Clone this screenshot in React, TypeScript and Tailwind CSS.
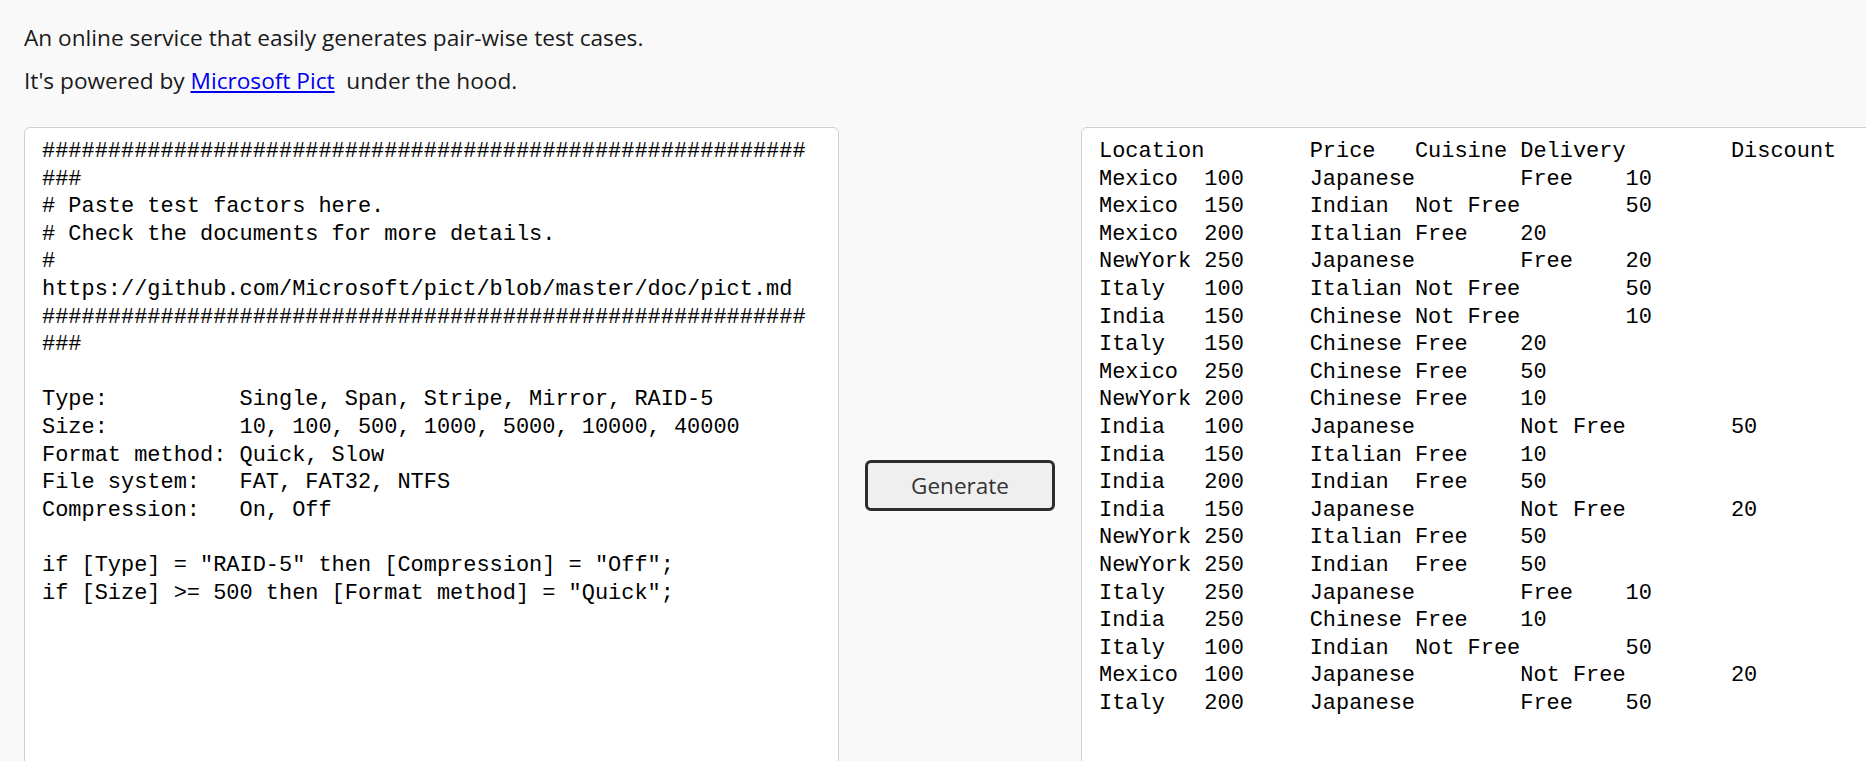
const FACTORS = [
  '##########################################################',
  '###',
  '# Paste test factors here.',
  '# Check the documents for more details.',
  '#',
  'https://github.com/Microsoft/pict/blob/master/doc/pict.md',
  '##########################################################',
  '###',
  '',
  'Type:          Single, Span, Stripe, Mirror, RAID-5',
  'Size:          10, 100, 500, 1000, 5000, 10000, 40000',
  'Format method: Quick, Slow',
  'File system:   FAT, FAT32, NTFS',
  'Compression:   On, Off',
  '',
  'if [Type] = "RAID-5" then [Compression] = "Off";',
  'if [Size] >= 500 then [Format method] = "Quick";',
].join('\n');

const RESULT = [
  'Location\tPrice\tCuisine\tDelivery\tDiscount',
  'Mexico\t100\tJapanese\tFree\t10',
  'Mexico\t150\tIndian\tNot Free\t50',
  'Mexico\t200\tItalian\tFree\t20',
  'NewYork\t250\tJapanese\tFree\t20',
  'Italy\t100\tItalian\tNot Free\t50',
  'India\t150\tChinese\tNot Free\t10',
  'Italy\t150\tChinese\tFree\t20',
  'Mexico\t250\tChinese\tFree\t50',
  'NewYork\t200\tChinese\tFree\t10',
  'India\t100\tJapanese\tNot Free\t50',
  'India\t150\tItalian\tFree\t10',
  'India\t200\tIndian\tFree\t50',
  'India\t150\tJapanese\tNot Free\t20',
  'NewYork\t250\tItalian\tFree\t50',
  'NewYork\t250\tIndian\tFree\t50',
  'Italy\t250\tJapanese\tFree\t10',
  'India\t250\tChinese\tFree\t10',
  'Italy\t100\tIndian\tNot Free\t50',
  'Mexico\t100\tJapanese\tNot Free\t20',
  'Italy\t200\tJapanese\tFree\t50',
].join('\n');

const boxClass =
  "w-[815px] h-[717px] shrink-0 resize-none overflow-hidden whitespace-pre bg-white border border-[#d0d0d0] rounded-[6px] pt-[10px] pl-[17px] pr-[17px] font-['Liberation_Mono',monospace] text-[21.95px] leading-[27.6px] text-black [tab-size:8] outline-none";

export default function App() {
  return (
    <div className="h-screen w-screen overflow-hidden bg-[#f9f9f9] font-['Open_Sans',sans-serif] text-[#1a1a1a]">
      {/* intro */}
      <div className="pl-6 pt-[22px] text-[22.65px] leading-[32px]">
        <p>An online service that easily generates pair-wise test cases.</p>
        <p className="mt-[11px]">
          It's powered by{' '}
          <a href="#" className="text-[#0000ee] underline">
            Microsoft Pict
          </a>
          {' '}&nbsp;under the hood.
        </p>
      </div>

      {/* editors */}
      <div className="flex items-center pl-6 mt-[30px]">
        <textarea readOnly wrap="off" spellCheck={false} value={FACTORS} className={boxClass} />
        <div className="w-[242px] shrink-0 flex justify-center">
          <button className="w-[190px] h-[51px] rounded-[6px] border-[3px] border-[#2b2d31] bg-[#efefef] text-[22.5px] text-[#333]">
            Generate
          </button>
        </div>
        <textarea readOnly wrap="off" spellCheck={false} value={RESULT} className={boxClass} />
      </div>
    </div>
  );
}
